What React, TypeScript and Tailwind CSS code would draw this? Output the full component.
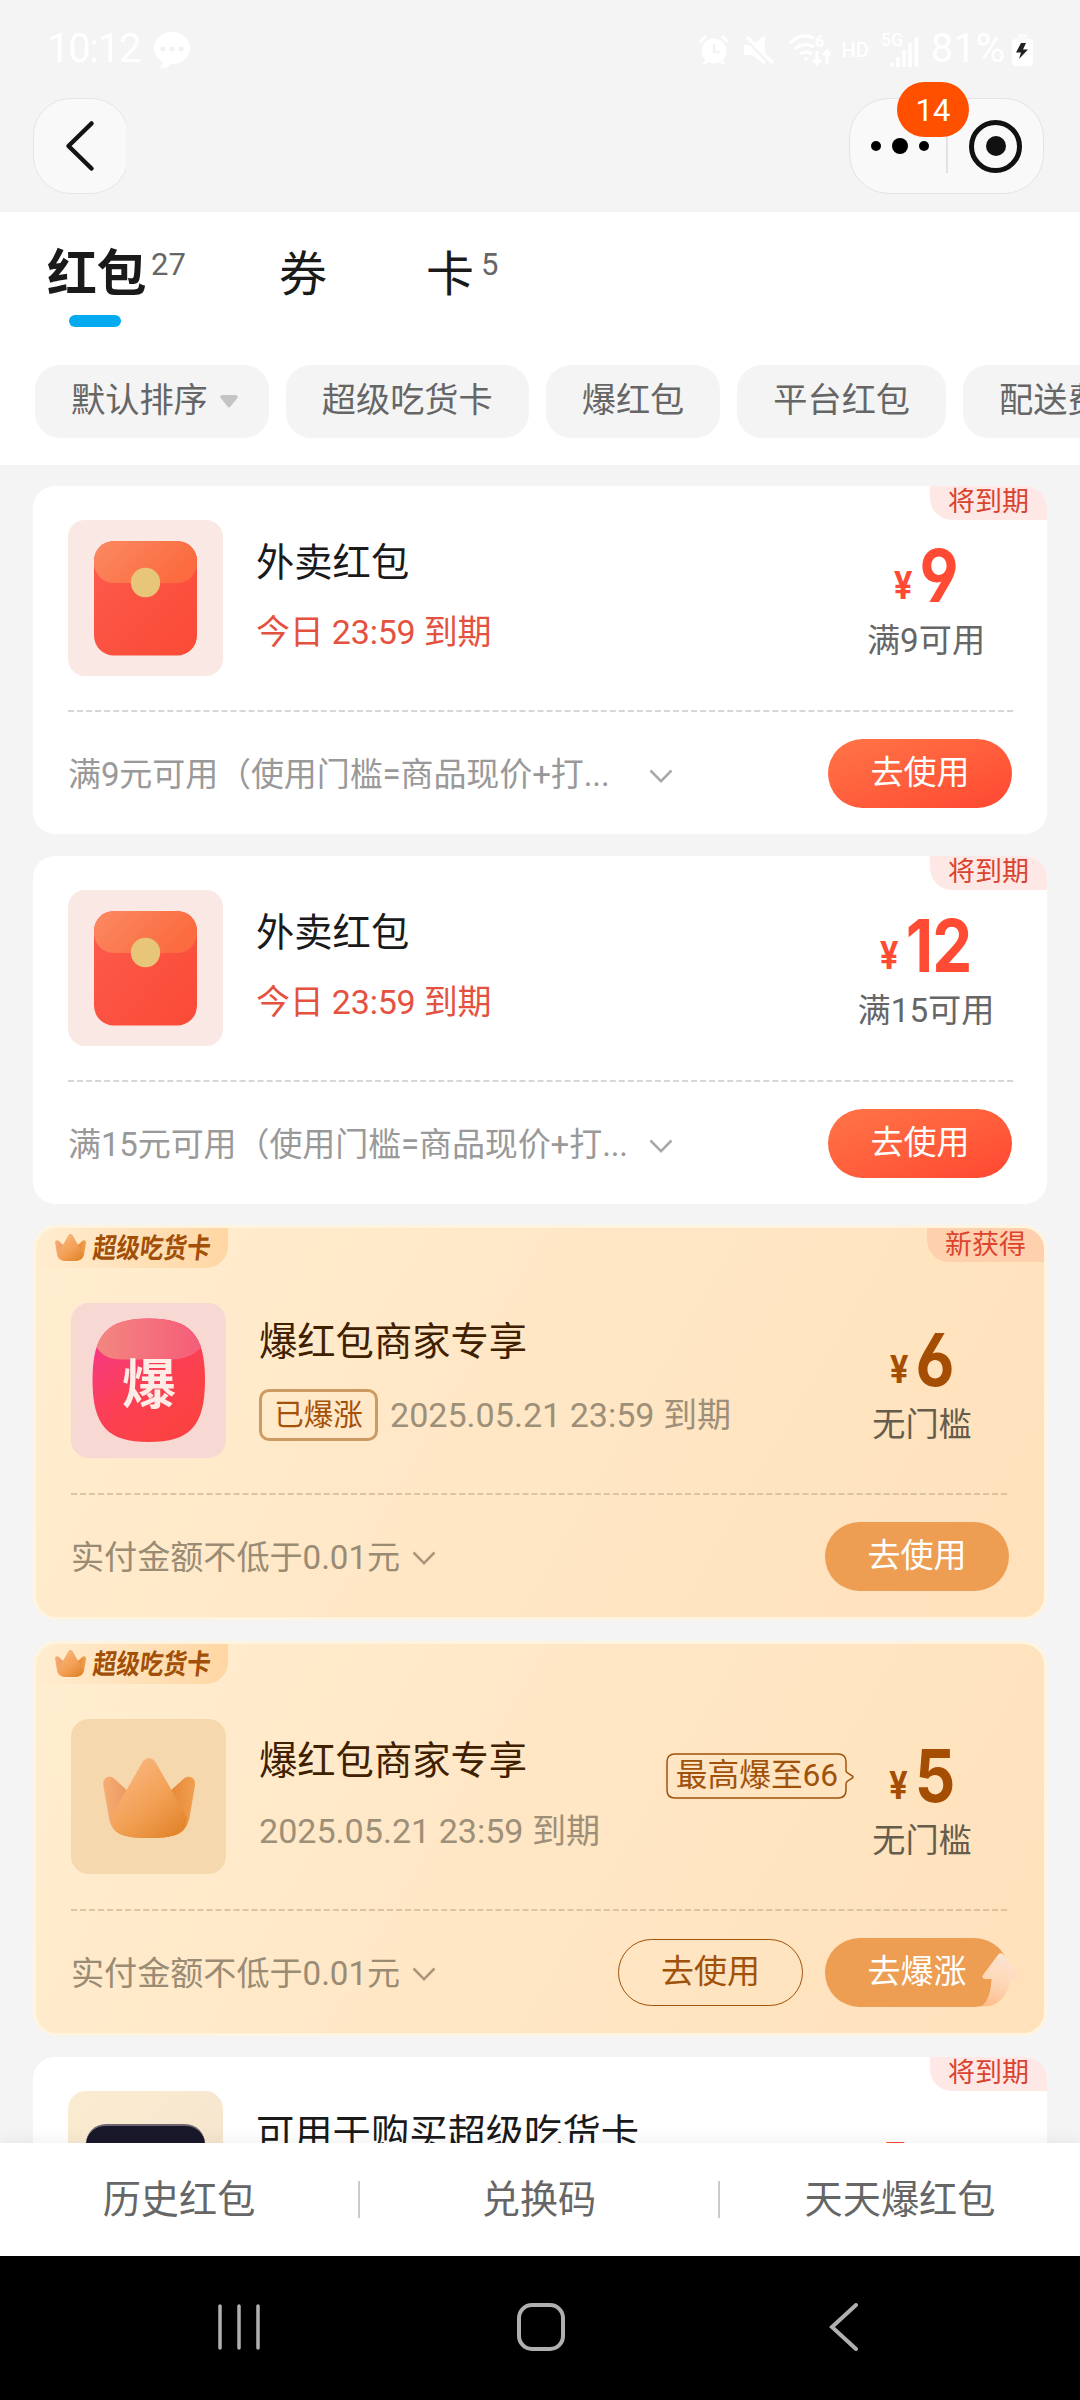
import type { ReactNode } from "react";

function EnvelopeIcon() {
  return (
    <svg viewBox="0 0 155 156" className="h-[156px] w-[155px] shrink-0">
      <defs>
        <linearGradient id="env" x1="0" y1="0" x2="1" y2="1">
          <stop offset="0" stopColor="#fd5b4e" />
          <stop offset="1" stopColor="#fa4a35" />
        </linearGradient>
        <linearGradient id="flap" x1="0" y1="0" x2="1" y2="0.4">
          <stop offset="0" stopColor="#fb8a63" />
          <stop offset="1" stopColor="#fb6b3f" />
        </linearGradient>
      </defs>
      <rect width="155" height="156" rx="17" fill="#fae8e5" />
      <rect x="26" y="21" width="103" height="114.500" rx="20" fill="url(#env)" />
      <path d="M26 41a20 20 0 0 1 20-20h63a20 20 0 0 1 20 20v2a20 20 0 0 1-20 20H46a20 20 0 0 1-20-20z" fill="url(#flap)" />
      <circle cx="77.500" cy="62.500" r="14.700" fill="#e8c679" />
    </svg>
  );
}

function BurstIcon() {
  return (
    <svg viewBox="0 0 155 155" className="h-[155px] w-[155px] shrink-0">
      <defs>
        <linearGradient id="burst" x1="0" y1="0.300" x2="0.500" y2="0.900">
          <stop offset="0" stopColor="#f5378e" />
          <stop offset="0.550" stopColor="#fb3f58" />
          <stop offset="1" stopColor="#fb4243" />
        </linearGradient>
        <linearGradient id="gloss" x1="0" y1="0" x2="1" y2="0">
          <stop offset="0" stopColor="#f28d80" />
          <stop offset="1" stopColor="#f65678" />
        </linearGradient>
        <clipPath id="burstClip">
          <path d="M77.800 15.500C119 15.500 134 31 134 77S119 139 77.800 139 21.500 123 21.500 77 36.500 15.500 77.800 15.500z" />
        </clipPath>
      </defs>
      <rect width="155" height="155" rx="18" fill="#f8d8d2" />
      <g clipPath="url(#burstClip)">
        <rect width="155" height="155" fill="url(#burst)" />
        <path d="M10 0H145V30L131 43C124 52 113 56.500 100 56.500H50C40 56.500 31 53 25.500 44L10 20z" fill="url(#gloss)" />
      </g>
      <text x="78" y="101" textAnchor="middle" fontSize="54" fontWeight="700" fill="#ffece6" className="font-['Noto_Sans_CJK_SC',sans-serif]">
        爆
      </text>
    </svg>
  );
}

function CrownShape({ id }: { id: string }) {
  return (
    <>
      <defs>
        <linearGradient id={id + "a"} x1="0.200" y1="0.200" x2="0.800" y2="1">
          <stop offset="0" stopColor="#f8b276" />
          <stop offset="0.500" stopColor="#f2a055" />
          <stop offset="1" stopColor="#e2852c" />
        </linearGradient>
        <linearGradient id={id + "b"} x1="0" y1="0" x2="1" y2="0">
          <stop offset="0" stopColor="#f6ad72" />
          <stop offset="0.250" stopColor="#ec9a63" />
          <stop offset="0.750" stopColor="#e68a3a" />
          <stop offset="1" stopColor="#f1a050" />
        </linearGradient>
      </defs>
      <path d="M0.300 27C-0.500 19 7 17 11 20.500L26 34 46 43 66 34 81 20.500C85 17 93 19 92 27L87 57C84 75 76 80 46 80S8 75 5.500 57z" fill={`url(#${id}b)`} />
      <path d="M39 5C42-1.500 50-1.500 53 5L84 59C83 75 75 80 46 80S9 75 8 59z" fill={`url(#${id}a)`} />
    </>
  );
}

function CrownIcon() {
  return (
    <div className="flex h-[155px] w-[155px] shrink-0 items-center justify-center rounded-[18px] bg-[#f5d8ad]">
      <svg viewBox="0 0 92 80" className="mt-[2px] h-[80px] w-[92px]">
        <CrownShape id="big" />
      </svg>
    </div>
  );
}

function CardIcon() {
  return (
    <div className="h-[156px] w-[155px] shrink-0 rounded-[18px] bg-linear-to-br from-[#faecd0] to-[#f5e3cf] px-[18px] pt-[33px]">
      <div className="h-[100px] rounded-[20px] border-t-2 border-[#6d6670] bg-[#19172a]" />
    </div>
  );
}

function Chevron({ color, className }: { color: string; className: string }) {
  return (
    <svg viewBox="0 0 24 14" className={"h-[14px] w-[24px] shrink-0 " + className} fill="none" stroke={color} strokeWidth="2.500">
      <path d="M1.500 1.500 12 12.200 22.500 1.500" />
    </svg>
  );
}

function StatusBar() {
  return (
    <div className="flex h-[98px] items-start px-[47px] pt-[26px] text-white">
      <span className="text-[40px] leading-[46px] tracking-[-1.300px]">10:12</span>
      <svg viewBox="0 0 36 37" className="ml-[14px] mt-[6px] h-[37px] w-[36px]">
        <path d="M18 0C28 0 36 7 36 16S28 32 18 32q-2 0-4 3l-8 2 3-7C3 27 0 22 0 16 0 7 8 0 18 0z" fill="#fff" />
        <g fill="#f1f1f1">
          <circle cx="9" cy="17" r="2.500" />
          <circle cx="18" cy="17" r="2.500" />
          <circle cx="27" cy="17" r="2.500" />
        </g>
      </svg>
      <div className="ml-auto flex items-start">
        <svg viewBox="0 0 30 30" className="mt-[9px] h-[30px] w-[30px]">
          <circle cx="15" cy="16" r="12.500" fill="#fff" />
          <path d="M1 7 7 1M29 7l-6-6M5 29l4-4M25 29l-4-4" stroke="#fff" strokeWidth="3" />
          <path d="M15 9v8h6" stroke="#f3f3f3" strokeWidth="2.500" fill="none" />
        </svg>
        <svg viewBox="0 0 30 30" className="ml-[15px] mt-[9px] h-[30px] w-[30px]">
          <path d="M0 10h8L21 0v30L8 20H0z" fill="#fff" />
          <path d="M0 3l27 27" stroke="#f4f4f4" strokeWidth="3" />
          <path d="M3 2l26 26" stroke="#fff" strokeWidth="3" />
        </svg>
        <svg viewBox="0 0 42 32" className="ml-[15px] mt-[8px] h-[32px] w-[42px]" fill="none" stroke="#fff" strokeWidth="3">
          <path d="M1 9Q12-2 25 4M6 15q9-8 19-2M11 20q6-4 12 0M17 23v3M28 17v13m-4-4 4 4 4-4M38 30V17m-4 4 4-4 4 4" />
          <text x="26" y="13" fontSize="16" fontWeight="700" fill="#fff" stroke="none" className="font-[Roboto,sans-serif]">6</text>
        </svg>
        <span className="ml-[10px] mt-[13px] text-[20px] font-medium leading-[22px]">HD</span>
        <div className="ml-[12px] mt-[7px] h-[34px] w-[38px]">
          <div className="text-[18px] font-medium leading-[14px]">5G</div>
          <svg viewBox="0 0 38 34" className="-mt-[14px] h-[34px] w-[38px]" stroke="#fff" strokeWidth="3.500">
            <path d="M11 34v-4M17 34V24M23 34V17M29 34V10M35.500 34V4" />
          </svg>
        </div>
        <span className="ml-[12px] text-[40px] leading-[46px]">81%</span>
        <svg viewBox="0 0 21 32" className="ml-[7px] mt-[8px] h-[32px] w-[21px]">
          <rect y="5" width="21" height="27" rx="4" fill="#fff" />
          <rect x="6" y="0" width="9" height="8" rx="2" fill="#fafafa" />
          <path d="M9 9 4 18.500h5L7 25l9-9.500h-5L14 9z" fill="#222" />
        </svg>
      </div>
    </div>
  );
}

function NavHeader() {
  return (
    <div className="flex h-[114px] items-start justify-between pl-[33px] pr-[36px]">
      <div className="h-[96px] w-[93px] overflow-hidden">
        <div className="flex h-[96px] w-[96px] items-center justify-center rounded-[38px] border-[1.500px] border-[#e6e6e6] bg-[#f9f9f9]">
          <svg viewBox="0 0 30 52" className="mr-[2px] h-[52px] w-[30px]" fill="none" stroke="#141414" strokeWidth="4.500" strokeLinecap="round" strokeLinejoin="round">
            <path d="M26.500 3.500 3.500 26l23 22.500" />
          </svg>
        </div>
      </div>
      <div className="relative flex h-[96px] w-[195px] items-center rounded-[40px] border-[1.500px] border-[#e4e4e4] bg-[#f9f9f9]">
        <div className="flex flex-1 items-center justify-center gap-[11px] pl-[3px]">
          <i className="size-[10px] rounded-full bg-black" />
          <i className="size-[16px] rounded-full bg-black" />
          <i className="size-[10px] rounded-full bg-black" />
        </div>
        <i className="h-[54px] w-[2px] bg-[#e2e2e2]" />
        <div className="flex w-[95px] justify-center">
          <div className="flex size-[53px] items-center justify-center rounded-full border-[5px] border-[#111]">
            <i className="size-[20px] rounded-full bg-[#111]" />
          </div>
        </div>
        <div className="absolute -top-[17px] left-[47px] h-[55px] w-[72px] rounded-full bg-[#ff5000] text-center text-[31px] leading-[57px] text-white">
          14
        </div>
      </div>
    </div>
  );
}

function Tabs() {
  return (
    <div className="flex h-[153px] items-start pl-[47px] pt-[34px] text-[#1a1a1a]">
      <div className="w-[232px]">
        <div className="flex h-[56px]">
          <b className="text-[50px] leading-[56px] tracking-[-0.5px]">红包</b>
          <span className="ml-[5px] text-[31px] leading-[38px] text-[#666]">27</span>
        </div>
        <div className="ml-[22px] mt-[13px] h-[12px] w-[52px] rounded-full bg-[#02aaef]" />
      </div>
      <span className="w-[147px] text-[48px] leading-[58px]">券</span>
      <span className="text-[48px] leading-[58px]">卡</span>
      <span className="ml-[7px] text-[31px] leading-[38px] text-[#666]">5</span>
    </div>
  );
}

function Chips() {
  return (
    <div className="flex h-[100px] gap-[17px] overflow-hidden pl-[35px]">
      {["默认排序", "超级吃货卡", "爆红包", "平台红包", "配送费"].map((t, i) => (
        <div key={t} className="flex h-[73px] shrink-0 items-start rounded-[25px] bg-[#f4f4f4] pl-[36px] pr-[36px] text-[34.200px] leading-[71px] text-[#666]">
          {t}
          {i === 0 && (
            <svg viewBox="0 0 18 13" className="-mr-[5px] ml-[12px] mt-[30px] h-[13px] w-[18px]">
              <path d="M2 0h14q3 1 1 3.500l-6.500 8q-1.500 2-3 0L1 3.500Q-1 1 2 0z" fill="#c4c4c4" />
            </svg>
          )}
        </div>
      ))}
    </div>
  );
}

function Price({ value, note, color, noteColor }: { value: string; note: string; color: string; noteColor: string }) {
  return (
    <div className="flex w-[176px] shrink-0 flex-col items-center pt-[16px]">
      <div className={"flex h-[80px] scale-x-[0.870] items-start font-[Inter,sans-serif] font-bold [font-feature-settings:'ss01'] " + color}>
        <span className="mr-[8px] mt-[9px] text-[38px] leading-[80px]">¥</span>
        <span className="text-[73px] leading-[80px] tracking-[-1px]">{value}</span>
      </div>
      <div className={"mt-[3px] whitespace-nowrap text-[33.200px] leading-[44px] " + noteColor}>{note}</div>
    </div>
  );
}

function Dashes({ color }: { color: string }) {
  return (
    <svg className="block h-[2px] w-full">
      <line x1="0" y1="1" x2="946" y2="1" stroke={color} strokeWidth="1.500" strokeDasharray="6 3.030" />
    </svg>
  );
}

function WhiteCard({ icon, title, date, desc, price }: { icon: ReactNode; title: string; date?: string; desc?: string; price: ReactNode }) {
  return (
    <div className="relative h-[348px] shrink-0 overflow-hidden rounded-[22px] bg-white pl-[35px] pr-[33px] pt-[34px]">
      <div className="absolute right-0 top-0 h-[34px] w-[117px] rounded-bl-[22px] bg-[#fee8e6] text-center text-[27px] leading-[33px] text-[#d9442f]">
        将到期
      </div>
      <div className="flex h-[190px]">
        {icon}
        <div className="ml-[33px] flex-1 pt-[20px]">
          <div className="whitespace-nowrap text-[38.300px] leading-[46px] text-[#1a1a1a]">{title}</div>
          {date && <div className="mt-[26px] text-[34px] leading-[40px] tracking-[-0.2px] text-[#e5513f]">{date}</div>}
        </div>
        {price}
      </div>
      <Dashes color="#c9c9c9" />
      {desc && (
        <div className="mt-[27px] flex h-[69px] items-center">
          <span className="mt-[3px] w-[581px] whitespace-nowrap text-[33px] leading-[44px] tracking-[-0.100px] text-[#999]">{desc}</span>
          <Chevron color="#a8a8a8" className="mt-[5px]" />
          <div className="ml-auto mr-[2px] h-[69px] w-[184px] rounded-full bg-linear-to-br from-[#ff7447] to-[#ff4631] text-center text-[33px] leading-[68px] text-white">
            去使用
          </div>
        </div>
      )}
    </div>
  );
}

function GoldCard({ icon, title, titlePad, badge, tag, bubble, value, children }: { icon: ReactNode; title: string; titlePad: string; badge?: string; tag?: string; bubble?: string; value: string; children: ReactNode }) {
  return (
    <div className="relative h-[395px] shrink-0 rounded-[24px] bg-[#fff4e0] p-[3px]">
      <div className="relative h-full overflow-hidden rounded-[21px] bg-linear-[120deg,#ffeed0,#ffe7c6_45%,#ffe1bb] pl-[35px] pr-[34px] pt-[75px]">
        <div className="absolute left-0 top-0 flex h-[40px] w-[192px] items-start rounded-br-[22px] bg-linear-to-r from-[#ffedd0] to-[#ffd6a3] pl-[19px]">
          <svg viewBox="0 0 92 80" className="mt-[6px] h-[27px] w-[31px]">
            <CrownShape id={"ribbon" + value} />
          </svg>
          <span className="ml-[7px] w-[120px] origin-left scale-x-[0.840] -skew-x-8 whitespace-nowrap text-[28px] font-bold leading-[41px] text-[#a24f08]">
            超级吃货卡
          </span>
        </div>
        {badge && (
          <div className="absolute right-0 top-0 h-[34px] w-[117px] rounded-bl-[22px] bg-[#ffd0ae] text-center text-[27px] leading-[34px] text-[#dd442f]">
            {badge}
          </div>
        )}
        <div className="flex h-[190px]">
          {icon}
          <div className={"ml-[33px] flex-1 " + titlePad}>
            <div className="h-[46px] whitespace-nowrap text-[38.300px] leading-[46px] text-[#3f2000]">{title}</div>
          </div>
          {bubble && (
            <div className="relative -mr-[14px] mt-[34px] h-[46px] w-[182px] text-center text-[31.700px] leading-[46px] text-[#a0520b]">
              <svg viewBox="0 0 188 46" className="absolute left-0 top-0 h-[46px] w-[188px]" fill="none" stroke="#a0520b" strokeWidth="1.500">
                <path d="M9 1h163q8 0 8 8v8.500q0 1.500 1.500 2.300l5 3.200q1 1 0 2l-5 3.200q-1.500 1-1.500 2.800V37q0 8-8 8H9q-8 0-8-8V9q0-8 8-8z" />
              </svg>
              {bubble}
            </div>
          )}
          <div className="flex pt-px">
            <Price value={value} note="无门槛" color="text-[#a44d03]" noteColor="text-[#665c4c]" />
          </div>
        </div>
        <div className="-mt-[104px] mb-[52px] ml-[188px] flex h-[52px] w-[490px] items-center gap-[12px]">
          {tag && (
            <span className="h-[52px] w-[119px] rounded-[10px] border-[3px] border-[#cc9a63] text-center text-[29.500px] leading-[46px] text-[#a4510a]">
              {tag}
            </span>
          )}
          <span className="-mt-px whitespace-nowrap text-[34.100px] leading-[50px] text-[#9d8f78]">2025.05.21 23:59 到期</span>
        </div>
        <Dashes color="#d2b894" />
        <div className="mt-[27px] flex h-[69px] items-center">
          <span className="mt-[2px] text-[33.100px] leading-[44px] text-[#998b74]">实付金额不低于0.01元</span>
          <Chevron color="#aa967a" className="ml-[12px] mt-[3px]" />
          {children}
        </div>
      </div>
    </div>
  );
}

function UpArrow() {
  return (
    <svg viewBox="0 0 38 54" className="absolute bottom-0 right-[-11px] h-[54px] w-[38px] overflow-visible">
      <defs>
        <linearGradient id="up" x1="0.600" y1="0" x2="0.400" y2="1">
          <stop offset="0" stopColor="#fce3d3" />
          <stop offset="0.450" stopColor="#fedabb" />
          <stop offset="0.700" stopColor="#fdd0ac" />
          <stop offset="1" stopColor="#fdbf8c" />
        </linearGradient>
      </defs>
      <path d="M16.500 1.200q2.500-2 5 .3L36 21q2 4-2 4.500h-6C27 40 18 53 3 53.500H-1C6 49 9 38 9.500 26H3q-4-.5-2-4z" fill="url(#up)" />
    </svg>
  );
}

export default function App() {
  return (
    <div className="flex h-[2400px] w-[1080px] flex-col overflow-hidden bg-[#f4f4f4] font-[Roboto,'Noto_Sans_CJK_SC',sans-serif]">
      <StatusBar />
      <NavHeader />
      <div className="bg-white">
        <Tabs />
        <Chips />
      </div>
      <div className="flex h-[1678px] flex-col overflow-hidden px-[33px] pt-[21px]">
        <WhiteCard
          icon={<EnvelopeIcon />}
          title="外卖红包"
          date="今日 23:59 到期"
          desc="满9元可用（使用门槛=商品现价+打..."
          price={<Price value="9" note="满9可用" color="text-[#ff4b33]" noteColor="text-[#666]" />}
        />
        <div className="h-[21.500px] shrink-0" />
        <WhiteCard
          icon={<EnvelopeIcon />}
          title="外卖红包"
          date="今日 23:59 到期"
          desc="满15元可用（使用门槛=商品现价+打..."
          price={<Price value="12" note="满15可用" color="text-[#ff4b33]" noteColor="text-[#666]" />}
        />
        <div className="h-[21.500px] shrink-0" />
        <GoldCard icon={<BurstIcon />} title="爆红包商家专享" titlePad="pt-[16px]" badge="新获得" tag="已爆涨" value="6">
          <div className="ml-auto mr-px h-[69px] w-[184px] rounded-full bg-[#ed9e53] text-center text-[33px] leading-[67px] text-white">去使用</div>
        </GoldCard>
        <div className="h-[21px] shrink-0" />
        <GoldCard icon={<CrownIcon />} title="爆红包商家专享" titlePad="pt-[19px]" bubble="最高爆至66" value="5">
          <div className="ml-auto h-[67px] w-[185px] rounded-full border-[1.500px] border-[#a0520b] text-center text-[33px] leading-[64px] text-[#a0520b]">去使用</div>
          <div className="relative ml-[22px] mr-px h-[69px] w-[184px] rounded-full bg-[#ed9e53] text-center text-[33px] leading-[67px] text-white">
            去爆涨
            <UpArrow />
          </div>
        </GoldCard>
        <div className="h-[21px] shrink-0" />
        <WhiteCard
          icon={<CardIcon />}
          title="可用于购买超级吃货卡"
          price={
            <div className="w-[176px] pl-[44px] pt-[36px] font-[Inter,sans-serif] text-[40px] font-bold leading-[60px] text-[#ff4b33]">5</div>
          }
        />
      </div>
      <div className="relative grid h-[113px] shrink-0 grid-cols-3 bg-white pt-[38px] text-center text-[38.200px] leading-[38px] text-[#666] shadow-[0_-4px_16px_rgba(0,0,0,0.050)]">
        <div className="h-[37px] border-r-2 border-[#ccc]">历史红包</div>
        <div className="h-[37px] border-r-2 border-[#ccc]">兑换码</div>
        <div>天天爆红包</div>
      </div>
      <div className="flex h-[144px] shrink-0 items-start bg-black pl-[217px] pt-[47px]">
        <svg viewBox="0 0 44 48" className="h-[48px] w-[44px]" stroke="#b0b0b0" strokeWidth="3.500" strokeLinecap="round">
          <path d="M3 3v42M22 3v42M41 3v42" />
        </svg>
        <div className="ml-[256px] h-[48px] w-[48px] rounded-[15px] border-[4px] border-[#b0b0b0]" />
        <svg viewBox="0 0 30 48" className="ml-[264px] h-[48px] w-[30px]" fill="none" stroke="#b0b0b0" strokeWidth="4" strokeLinecap="round">
          <path d="M27 2 3 24l24 22" />
        </svg>
      </div>
    </div>
  );
}
